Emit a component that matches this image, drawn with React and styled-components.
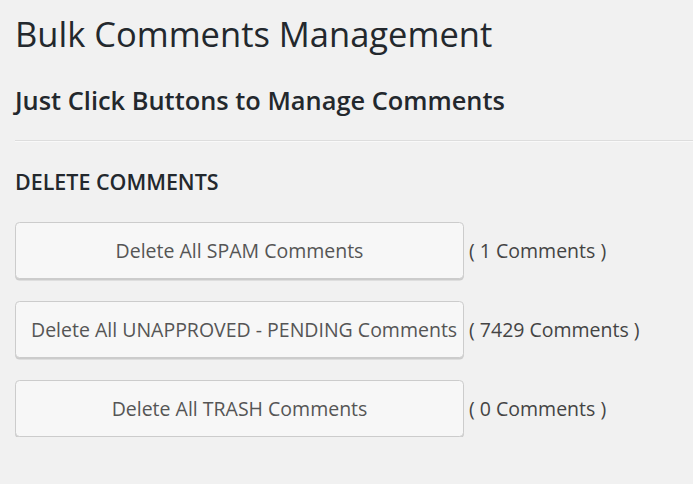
import React from "react";
import styled, { createGlobalStyle } from "styled-components";

const Global = createGlobalStyle`
  html, body { margin: 0; padding: 0; background: #f1f1f1; }
  body { font-family: "Open Sans", "Noto Sans", sans-serif; color: #444; }
`;

const Page = styled.div`
  padding: 0 0 0 15px;
  overflow: hidden;
`;

const Title = styled.h1`
  margin: 11.5px 0 0;
  font-size: 34.5px;
  line-height: 44.85px;
  font-weight: 400;
  color: #23282d;
`;

const Subtitle = styled.h2`
  margin: 27.3px 0 0;
  font-size: 25.4px;
  line-height: 33.8px;
  font-weight: 600;
  color: #23282d;
`;

const Rule = styled.hr`
  margin: 22.5px 0 0;
  border: 0;
  border-top: 1px solid #dddddd;
  border-bottom: 1px solid #f9f9f9;
  height: 0;
`;

const Section = styled.h3`
  margin: 24.6px 0 0;
  font-size: 21.45px;
  line-height: 30.1px;
  font-weight: 600;
  color: #23282d;
`;

const List = styled.div`
  margin-top: 25.3px;
  display: flex;
  flex-direction: column;
  gap: 22px;
`;

const Row = styled.div`
  display: flex;
  align-items: center;
  gap: 5px;
`;

const Button = styled.button`
  box-sizing: border-box;
  flex: none;
  display: block;
  width: 449px;
  height: 57px;
  padding: 0 15px;
  margin: 0;
  text-align: center;
  line-height: 55px;
  white-space: nowrap;
  background: #f7f7f7;
  border: 1px solid #cccccc;
  border-radius: 4.5px;
  box-shadow: 0 1.5px 0 #cccccc;
  font-family: "Open Sans", "Noto Sans", sans-serif;
  font-size: 19.5px;
  color: #555555;
  cursor: pointer;
  overflow: visible;
`;

const Count = styled.span`
  font-size: 19.5px;
  color: #444444;
  white-space: nowrap;
`;

const rows = [
  { label: "Delete All SPAM Comments", count: 1 },
  { label: "Delete All UNAPPROVED - PENDING Comments", count: 7429 },
  { label: "Delete All TRASH Comments", count: 0 },
];

export default function App() {
  return (
    <>
      <Global />
      <Page>
        <Title>Bulk Comments Management</Title>
        <Subtitle>Just Click Buttons to Manage Comments</Subtitle>
        <Rule />
        <Section>DELETE COMMENTS</Section>
        <List>
          {rows.map((r) => (
            <Row key={r.label}>
              <Button type="button">{r.label}</Button>
              <Count>( {r.count} Comments )</Count>
            </Row>
          ))}
        </List>
      </Page>
    </>
  );
}
